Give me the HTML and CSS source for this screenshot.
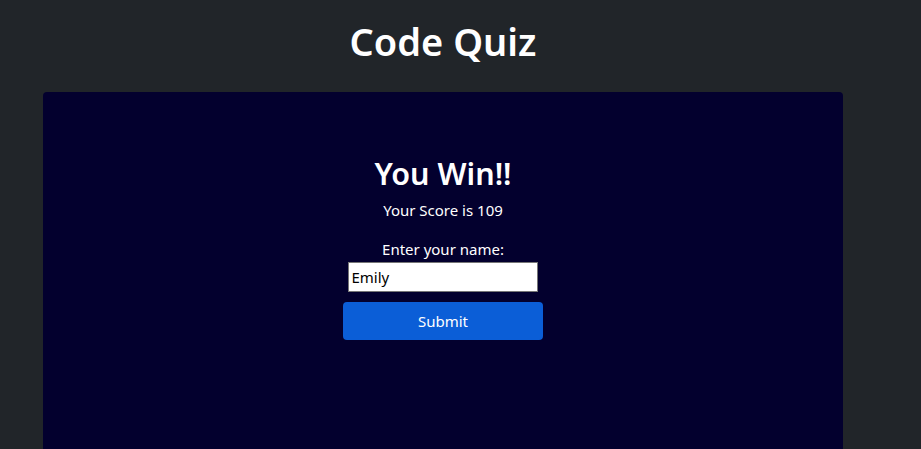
FILE: index.html
```html
<!DOCTYPE html>
<html>
<head>
<meta charset="utf-8">
<link rel="stylesheet" href="styles.css">
</head>
<body>
<header class="top">
  <h1 class="title">Code Quiz</h1>
</header>
<main class="card">
  <h2 class="win">You Win!!</h2>
  <p class="score">Your Score is 109</p>
  <form class="form">
    <label class="label" for="name">Enter your name:</label>
    <input class="input" id="name" type="text" value="Emily">
    <button class="btn" type="button">Submit</button>
  </form>
</main>
</body>
</html>
```
FILE: styles.css
```css
html, body {
  margin: 0;
  padding: 0;
  background: #212529;
  color: #fff;
  font-family: "Noto Sans", "Open Sans", sans-serif;
  height: 100%;
  overflow: hidden;
}
.top {
  width: 800px;
  margin-left: 43px;
  display: flex;
  justify-content: center;
  padding-top: 15px;
  height: 92px;
  box-sizing: border-box;
}
.title {
  margin: 0;
  font-size: 38px;
  font-weight: 600;
  line-height: 52px;
}
.card {
  width: 800px;
  margin-left: 43px;
  height: 357px;
  background: #03002e;
  border-radius: 4px 4px 0 0;
  display: flex;
  flex-direction: column;
  align-items: center;
  padding-top: 60px;
  box-sizing: border-box;
}
.win {
  margin: 0;
  font-size: 30.5px;
  font-weight: 600;
  line-height: 42px;
}
.score {
  margin: 6px 0 0;
  font-size: 15px;
  line-height: 20px;
}
.form {
  margin-top: 19px;
  display: flex;
  flex-direction: column;
  align-items: center;
}
.label {
  font-size: 15px;
  line-height: 20px;
}
.input {
  margin: 3px 1px 0 0;
  width: 190px;
  height: 30px;
  box-sizing: border-box;
  border: 1px solid #767676;
  padding: 0 3px;
  font-family: inherit;
  font-size: 15px;
  color: #000;
  background: #fff;
  border-radius: 0;
}
.btn {
  margin-top: 10px;
  width: 200px;
  height: 38px;
  border: none;
  border-radius: 4px;
  background: #0b5ed7;
  color: #fff;
  font-family: inherit;
  font-size: 15px;
}
```
